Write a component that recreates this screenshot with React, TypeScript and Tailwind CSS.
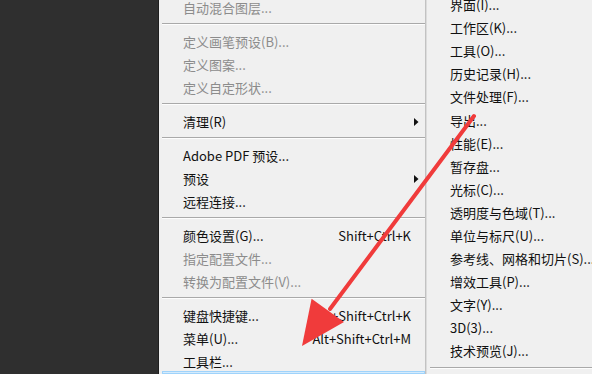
import React from "react";

type Item =
  | { type: "sep" }
  | { type: "item"; label: string; disabled?: boolean; shortcut?: string; arrow?: boolean };

const mainItems: Item[] = [
  { type: "item", label: "自动混合图层...", disabled: true },
  { type: "sep" },
  { type: "item", label: "定义画笔预设(B)...", disabled: true },
  { type: "item", label: "定义图案...", disabled: true },
  { type: "item", label: "定义自定形状...", disabled: true },
  { type: "sep" },
  { type: "item", label: "清理(R)", arrow: true },
  { type: "sep" },
  { type: "item", label: "Adobe PDF 预设..." },
  { type: "item", label: "预设", arrow: true },
  { type: "item", label: "远程连接..." },
  { type: "sep" },
  { type: "item", label: "颜色设置(G)...", shortcut: "Shift+Ctrl+K" },
  { type: "item", label: "指定配置文件...", disabled: true },
  { type: "item", label: "转换为配置文件(V)...", disabled: true },
  { type: "sep" },
  { type: "item", label: "键盘快捷键...", shortcut: "Alt+Shift+Ctrl+K" },
  { type: "item", label: "菜单(U)...", shortcut: "Alt+Shift+Ctrl+M" },
  { type: "item", label: "工具栏..." },
];

const subItems = [
  "界面(I)...",
  "工作区(K)...",
  "工具(O)...",
  "历史记录(H)...",
  "文件处理(F)...",
  "导出...",
  "性能(E)...",
  "暂存盘...",
  "光标(C)...",
  "透明度与色域(T)...",
  "单位与标尺(U)...",
  "参考线、网格和切片(S)...",
  "增效工具(P)...",
  "文字(Y)...",
  "3D(3)...",
  "技术预览(J)...",
];

const font = { fontFamily: '"Noto Sans CJK SC", "Noto Sans", sans-serif' };

function Sep() {
  return (
    <div className="h-[11px] shrink-0 pt-[4px]">
      <div className="h-px bg-[#a9a9a9]" />
      <div className="h-px bg-[#fdfdfd]" />
    </div>
  );
}

export default function App() {
  return (
    <div
      className="relative flex h-[374px] w-[592px] overflow-hidden bg-[#2e2e2e] text-[13px] leading-none"
      style={font}
    >
      <div className="h-full w-[159px] shrink-0 border-r border-[#1f1f1f] bg-[#2f2f2f]" />

      {/* main menu */}
      <div className="flex h-full w-[267px] shrink-0 flex-col border-r border-[#c2c2c2] bg-[#f0f0f0] pl-[3px]">
        <div className="-mt-[4px] flex flex-col">
          {mainItems.map((it, i) =>
            it.type === "sep" ? (
              <Sep key={i} />
            ) : (
              <div
                key={i}
                className={`flex h-[23px] shrink-0 items-center pl-[21px] pr-[14px] ${
                  it.disabled ? "text-[#8c8c8c]" : "text-[#111111]"
                }`}
              >
                <span className="flex-1 whitespace-nowrap">{it.label}</span>
                {it.shortcut && <span className="whitespace-nowrap">{it.shortcut}</span>}
                {it.arrow && (
                  <svg width="5" height="8" viewBox="0 0 5 8" className="mr-[-8px]">
                    <path d="M0 0 L4.5 4 L0 8 Z" fill="#111" />
                  </svg>
                )}
              </div>
            )
          )}
        </div>
        <div className="-mt-[2px] h-[20px] border border-[#9fd3fb] bg-[#d5ebfc]" />
      </div>

      {/* submenu */}
      <div className="flex h-full flex-1 flex-col border-l border-[#dcdcdc] bg-[#f0f0f0] pl-[3px]">
        <div className="-mt-[7px] flex flex-col">
          {subItems.map((s, i) => (
            <div key={i} className="flex h-[23.1px] shrink-0 items-center whitespace-nowrap pl-[20px] text-[#111111]">
              {s}
            </div>
          ))}
          <Sep />
        </div>
      </div>

      {/* red arrow annotation */}
      <svg className="pointer-events-none absolute left-0 top-0" width="592" height="374" viewBox="0 0 592 374">
        <line x1="474" y1="116" x2="330" y2="309" stroke="#f03b3b" strokeWidth="4" strokeLinecap="round" />
        <polygon points="302,346 311.6,298.7 344,322.1" fill="#f03b3b" />
      </svg>
    </div>
  );
}
